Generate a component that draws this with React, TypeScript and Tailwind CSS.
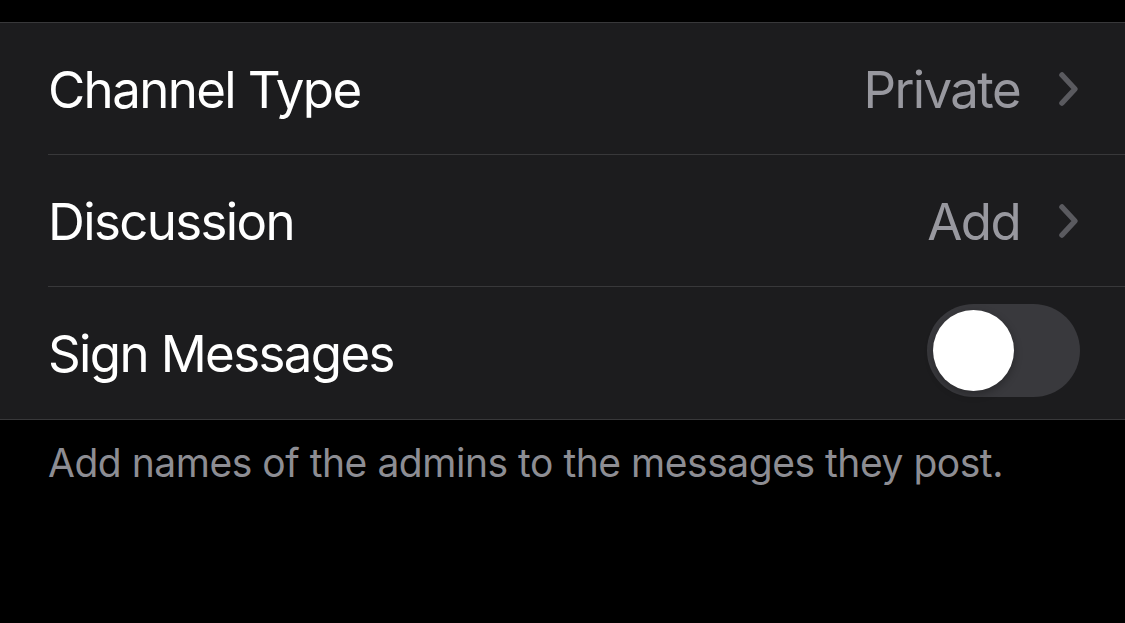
import React from "react"

function Chevron() {
  return (
    <svg width="22" height="36" viewBox="0 0 22 36" fill="none" className="ml-[38px]">
      <path d="M4 4 L17 18 L4 32" stroke="#5a5a5f" strokeWidth="5.5" strokeLinecap="round" strokeLinejoin="round" />
    </svg>
  )
}

function Row({ label, value, last }: { label: string; value?: string; last?: boolean }) {
  return (
    <div className="pl-[48px]">
      <div className={`flex h-[132px] items-center pr-[45px] ${last ? "" : "border-b border-[#38383a]"}`}>
        <span className="pt-[3px] text-white">{label}</span>
        <div className="ml-auto flex items-center">
          {value ? (
            <>
              <span className="pt-[3px] text-[#98989f]">{value}</span>
              <Chevron />
            </>
          ) : (
            <div className="mb-[5px] flex h-[93px] w-[153px] items-center rounded-full bg-[#39393d] pl-[6px]">
              <div className="h-[81px] w-[81px] rounded-full bg-white shadow-[0_3px_8px_rgba(0,0,0,0.3)]" />
            </div>
          )}
        </div>
      </div>
    </div>
  )
}

export default function App() {
  return (
    <div
      className="h-[623px] w-[1125px] bg-black pt-[22px] text-[51px] tracking-[-0.032em]"
      style={{ fontFamily: "Inter, 'Noto Sans', sans-serif" }}
    >
      <div className="border-y border-[#38383a] bg-[#1c1c1e]">
        <Row label="Channel Type" value="Private" />
        <Row label="Discussion" value="Add" />
        <Row label="Sign Messages" last />
      </div>
      <p className="px-[48px] pt-[14px] text-[39px] tracking-[-0.012em] text-[#8d8d93]">
        Add names of the admins to the messages they post.
      </p>
    </div>
  )
}
